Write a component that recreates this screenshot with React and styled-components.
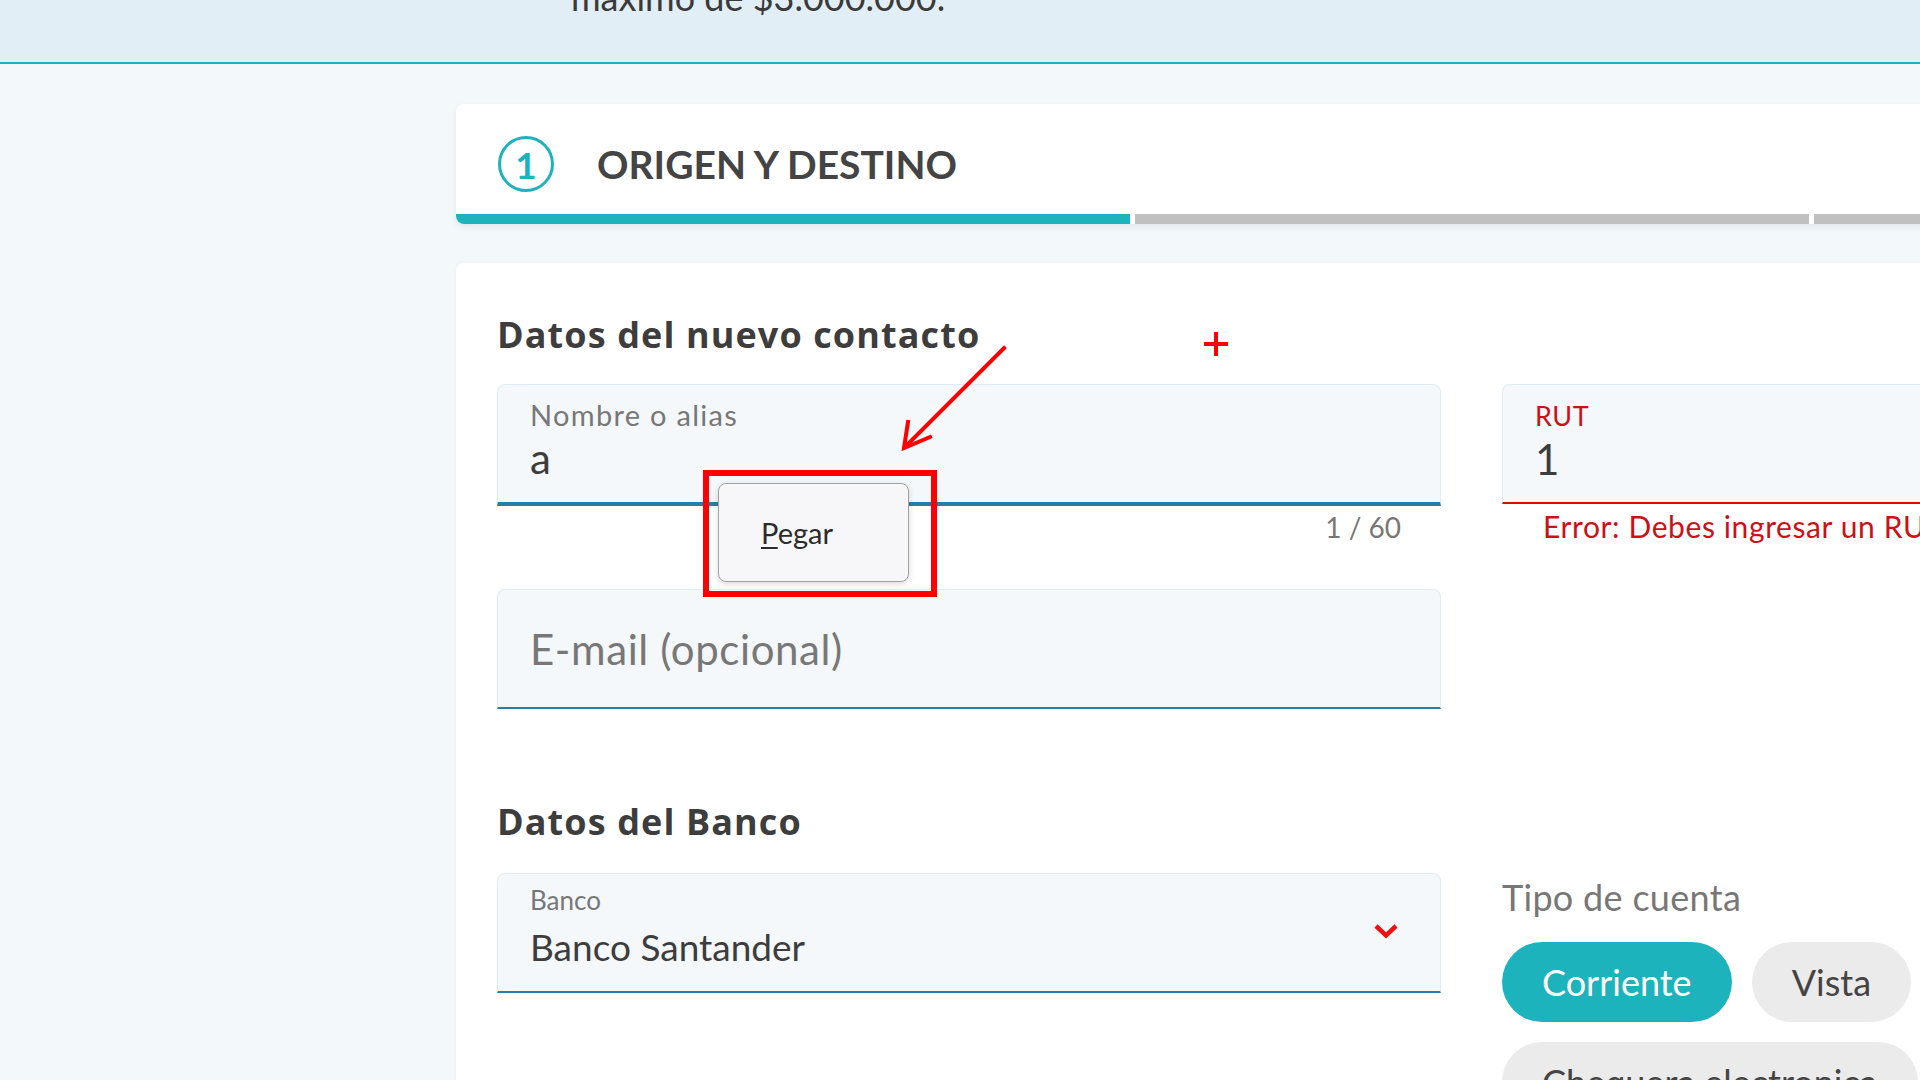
import React from "react";
import styled, { createGlobalStyle } from "styled-components";

const Global = createGlobalStyle`
  html, body { margin: 0; padding: 0; }
  body {
    background: #f3f8fb;
    font-family: Lato, "Open Sans", sans-serif;
    color: #3d3d3d;
    overflow: hidden;
  }
  #root { width: 1920px; height: 1080px; overflow: hidden; }
`;

const Page = styled.div`
  position: relative;
  width: 1920px;
  height: 1080px;
  overflow: hidden;
`;

const Notice = styled.div`
  height: 62px;
  background: #e1eef5;
  border-bottom: 2px solid #1db3bd;
  padding-left: 571px;
  overflow: hidden;
`;

const NoticeText = styled.p`
  margin: -24px 0 0;
  font-size: 36px;
  line-height: 43px;
  color: #3a3a3a;
  white-space: nowrap;
`;

const Main = styled.main`
  display: flex;
  flex-direction: column;
  align-items: flex-start;
  gap: 39px;
  padding: 40px 0 0 456px;
  width: 2600px;
`;

const StepperCard = styled.section`
  flex-shrink: 0;
  width: 2037px;
  background: #fff;
  border-radius: 8px;
  overflow: hidden;
  box-shadow: 0 3px 6px rgba(40, 60, 80, 0.09);
`;

const StepHeader = styled.div`
  display: flex;
  align-items: center;
  gap: 43px;
  padding: 32px 0 22px 42px;
`;

const StepCircle = styled.div`
  width: 56px;
  height: 56px;
  box-sizing: border-box;
  border: 3px solid #1db3bd;
  border-radius: 50%;
  display: flex;
  align-items: center;
  justify-content: center;
  color: #1db3bd;
  font-size: 37px;
  font-weight: 700;
  line-height: 1;
`;

const StepTitle = styled.h1`
  margin: 0;
  font-size: 39px;
  line-height: 47px;
  font-weight: 700;
  color: #444;
`;

const Progress = styled.div`
  display: flex;
  gap: 5px;
`;

const Segment = styled.div`
  width: 674px;
  height: 10px;
  flex-shrink: 0;
  background: ${(p) => (p.$active ? "#1db3bd" : "#c0c0c0")};
`;

const FormCard = styled.section`
  flex-shrink: 0;
  width: 2037px;
  box-sizing: border-box;
  background: #fff;
  border-radius: 8px;
  padding: 50px 41px 60px;
  box-shadow: 0 1px 4px rgba(40, 60, 80, 0.06);
`;

const SectionTitle = styled.h2`
  margin: ${(p) => p.$top || 0}px 0 ${(p) => p.$bottom}px;
  font-family: "Open Sans", Lato, sans-serif;
  font-size: 36px;
  line-height: 43px;
  font-weight: 700;
  letter-spacing: 1.1px;
  color: #3d3d3d;
`;

const Grid = styled.div`
  display: grid;
  grid-template-columns: 944px 944px;
  column-gap: 61px;
  align-items: start;
`;

const Column = styled.div`
  display: flex;
  flex-direction: column;
`;

const Field = styled.div`
  box-sizing: content-box;
  height: 117px;
  display: flex;
  background: #f4f8fb;
  border: 1px solid #dfecf1;
  border-bottom: ${(p) => p.$line || 2}px solid ${(p) => (p.$error ? "#cc1016" : "#277ea6")};
  border-radius: 8px 8px 0 0;
  padding: 0 41px 0 32px;
  margin-top: ${(p) => p.$mt || 0}px;
`;

const FieldBody = styled.div`
  flex: 1;
  display: flex;
  flex-direction: column;
  padding-top: ${(p) => p.$pt}px;
`;

const FieldLabel = styled.label`
  font-size: ${(p) => p.$size || 26}px;
  letter-spacing: ${(p) => p.$ls || 0}px;
  line-height: 31px;
  color: ${(p) => (p.$error ? "#cc1016" : "#777")};
`;

const FieldValue = styled.div`
  margin-top: ${(p) => p.$mt}px;
  font-size: ${(p) => p.$size || 42}px;
  line-height: ${(p) => Math.round((p.$size || 42) * 1.2)}px;
  letter-spacing: ${(p) => p.$ls || 0}px;
  color: ${(p) => (p.$placeholder ? "#777" : "#3d3d3d")};
  white-space: nowrap;
`;

const Helper = styled.div`
  margin-top: ${(p) => p.$mt}px;
  font-size: ${(p) => (p.$error ? 30 : 28)}px;
  letter-spacing: ${(p) => (p.$error ? 0.6 : 0)}px;
  line-height: 34px;
  color: ${(p) => (p.$error ? "#cc1016" : "#777")};
  text-align: ${(p) => (p.$right ? "right" : "left")};
  padding: ${(p) => (p.$right ? "0 40px 0 0" : "0 0 0 41px")};
  white-space: nowrap;
`;

const Chevron = styled.svg`
  align-self: center;
  margin-top: -4px;
  width: 26px;
  height: 16px;
  flex-shrink: 0;
`;

const TypeLabel = styled.div`
  margin-top: 3px;
  font-size: 36px;
  letter-spacing: 0.3px;
  line-height: 42px;
  color: #777;
`;

const PillGroup = styled.div`
  margin-top: 24px;
  max-width: 820px;
  display: flex;
  flex-wrap: wrap;
  gap: 20px;
`;

const Pill = styled.button`
  height: 80px;
  padding: 0 40px;
  border: none;
  border-radius: 40px;
  font-family: inherit;
  font-size: 36px;
  background: ${(p) => (p.$active ? "#1db3bd" : "#ebebeb")};
  color: ${(p) => (p.$active ? "#fff" : "#444")};
  white-space: nowrap;
`;

const Annotation = styled.svg`
  position: absolute;
  left: 0;
  top: 0;
  width: 1920px;
  height: 1080px;
  pointer-events: none;
`;

const Highlight = styled.div`
  position: absolute;
  left: 703px;
  top: 470px;
  width: 234px;
  height: 127px;
  box-sizing: border-box;
  border: 6px solid #ff0000;
`;

const ContextMenu = styled.div`
  position: absolute;
  left: 718px;
  top: 483px;
  width: 191px;
  height: 99px;
  box-sizing: border-box;
  background: #f7f7f9;
  border: 1px solid #a2a2a2;
  border-radius: 8px;
  box-shadow: 0 2px 6px rgba(0, 0, 0, 0.15);
  display: flex;
  align-items: center;
  padding: 0 0 0 42px;
`;

const MenuItem = styled.span`
  font-size: 29px;
  color: #2b2b2b;
  & u { text-decoration-thickness: 2px; text-underline-offset: 3px; }
`;

export default function App() {
  return (
    <Page>
      <Global />
      <Notice>
        <NoticeText>máximo de $3.000.000.</NoticeText>
      </Notice>
      <Main>
        <StepperCard>
          <StepHeader>
            <StepCircle>1</StepCircle>
            <StepTitle>ORIGEN Y DESTINO</StepTitle>
          </StepHeader>
          <Progress>
            <Segment $active />
            <Segment />
            <Segment />
          </Progress>
        </StepperCard>

        <FormCard>
          <SectionTitle $bottom={28}>Datos del nuevo contacto</SectionTitle>
          <Grid>
            <Column>
              <Field $line={4}>
                <FieldBody $pt={14}>
                  <FieldLabel $size={29} $ls={1.3}>Nombre o alias</FieldLabel>
                  <FieldValue $mt={3}>a</FieldValue>
                </FieldBody>
              </Field>
              <Helper $right $mt={4}>1 / 60</Helper>
              <Field $mt={45}>
                <FieldBody $pt={34}>
                  <FieldValue $mt={0} $ls={0.6} $placeholder>E-mail (opcional)</FieldValue>
                </FieldBody>
              </Field>
            </Column>
            <Column>
              <Field $error>
                <FieldBody $pt={15}>
                  <FieldLabel $error $size={27} $ls={0.5}>RUT</FieldLabel>
                  <FieldValue $mt={3}>1</FieldValue>
                </FieldBody>
              </Field>
              <Helper $error $mt={5}>Error: Debes ingresar un RUT válido</Helper>
            </Column>
          </Grid>

          <SectionTitle $top={91} $bottom={30}>Datos del Banco</SectionTitle>
          <Grid>
            <Column>
              <Field>
                <FieldBody $pt={11}>
                  <FieldLabel>Banco</FieldLabel>
                  <FieldValue $mt={9} $size={37}>Banco Santander</FieldValue>
                </FieldBody>
                <Chevron viewBox="0 0 26 16">
                  <path d="M3 3 L13 12.5 L23 3" fill="none" stroke="#ee1111" strokeWidth="4.5" />
                </Chevron>
              </Field>
            </Column>
            <Column>
              <TypeLabel>Tipo de cuenta</TypeLabel>
              <PillGroup>
                <Pill $active>Corriente</Pill>
                <Pill>Vista</Pill>
                <Pill>Chequera electronica</Pill>
              </PillGroup>
            </Column>
          </Grid>
        </FormCard>
      </Main>

      <Highlight />
      <ContextMenu>
        <MenuItem><u>P</u>egar</MenuItem>
      </ContextMenu>
      <Annotation viewBox="0 0 1920 1080">
        <g stroke="#ff0000" strokeWidth="4" fill="none" strokeLinecap="square">
          <line x1="1004" y1="348" x2="906" y2="446" />
          <polyline points="908,422 904,448 930,437" />
          <line x1="1216" y1="334" x2="1216" y2="354" />
          <line x1="1206" y1="344" x2="1226" y2="344" />
        </g>
      </Annotation>
    </Page>
  );
}
